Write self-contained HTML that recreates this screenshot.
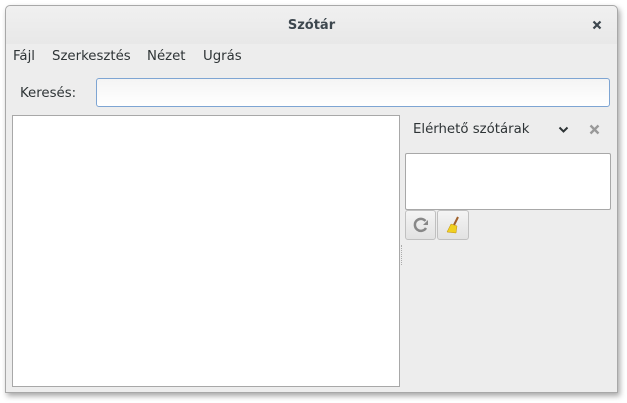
<!DOCTYPE html>
<html><head><style>
body{margin:0;width:627px;height:403px;background:#fff;position:relative;font-family:"Liberation Sans","DejaVu Sans",sans-serif;overflow:hidden}
.win{position:absolute;left:5px;top:5px;width:613px;height:388px;background:#ededed;border:1px solid #a8a8a8;box-shadow:2px 3px 6px rgba(0,0,0,.35);border-radius:5px 5px 0 0;box-sizing:border-box}
.title{position:absolute;left:0;top:0;width:100%;height:38px;background:linear-gradient(#f0f0f0,#e8e8e8);border-radius:5px 5px 0 0;text-align:center;line-height:40px;font-size:13px;font-weight:bold;color:#3d474e;font-family:"DejaVu Sans",sans-serif}
.t{position:absolute;font-size:13.3px;color:#2e3436;font-family:"DejaVu Sans",sans-serif}
</style></head><body>
<div class="win">
<div class="title">Szótár</div>
<svg style="position:absolute;right:15px;top:14px" width="10" height="10"><path d="M1.5 1.5L8.5 8.5M8.5 1.5L1.5 8.5" stroke="#3d474e" stroke-width="2.2"/></svg>
</div>
<div class="t" style="left:13px;top:49px">Fájl</div>
<div class="t" style="left:52px;top:49px">Szerkesztés</div>
<div class="t" style="left:147px;top:49px">Nézet</div>
<div class="t" style="left:203px;top:49px">Ugrás</div>
<div class="t" style="left:20px;top:86px">Keresés:</div>
<div style="position:absolute;left:96px;top:78px;width:514px;height:29px;border:1px solid #7ea5d3;border-radius:3px;background:linear-gradient(#f4f4f4,#fff);box-sizing:border-box"></div>
<div style="position:absolute;left:12px;top:115px;width:388px;height:272px;border:1px solid #a8a8a8;background:#fff;box-sizing:border-box"></div>
<div class="t" style="left:413px;top:122px">Elérhető szótárak</div>
<svg style="position:absolute;left:558px;top:126px" width="11" height="8"><path d="M1.5 1.5L5.5 5.5L9.5 1.5" stroke="#2e3436" stroke-width="2" fill="none"/></svg>
<svg style="position:absolute;left:589px;top:124px" width="11" height="11"><path d="M1.5 1.5L9.5 9.5M9.5 1.5L1.5 9.5" stroke="#999" stroke-width="2.4"/></svg>
<div style="position:absolute;left:405px;top:153px;width:206px;height:57px;border:1px solid #a8a8a8;background:#fff;box-sizing:border-box;border-radius:2px"></div>
<div style="position:absolute;left:405px;top:210px;width:31px;height:30px;border:1px solid #c0c0c0;border-radius:3px;background:linear-gradient(#f4f4f4,#e2e2e2);box-sizing:border-box">
<svg width="30" height="28"><path d="M19.5 10 A6 6 0 1 0 20 17" stroke="#888" stroke-width="2.5" fill="none"/><path d="M17 14 L22 14 L22 9 Z" fill="#888"/></svg></div>
<div style="position:absolute;left:437px;top:210px;width:32px;height:30px;border:1px solid #c0c0c0;border-radius:3px;background:linear-gradient(#f4f4f4,#e2e2e2);box-sizing:border-box">
<svg width="30" height="28"><line x1="20" y1="6" x2="16" y2="14" stroke="#a0602a" stroke-width="2"/><path d="M13 13 L19 15 L18 22 L9 21 Z" fill="#f0d020" stroke="#c09010" stroke-width=".5"/></svg></div>
<div style="position:absolute;left:401px;top:245px;width:2px;height:20px;border-left:1px dotted #aaa"></div>
</body></html>
